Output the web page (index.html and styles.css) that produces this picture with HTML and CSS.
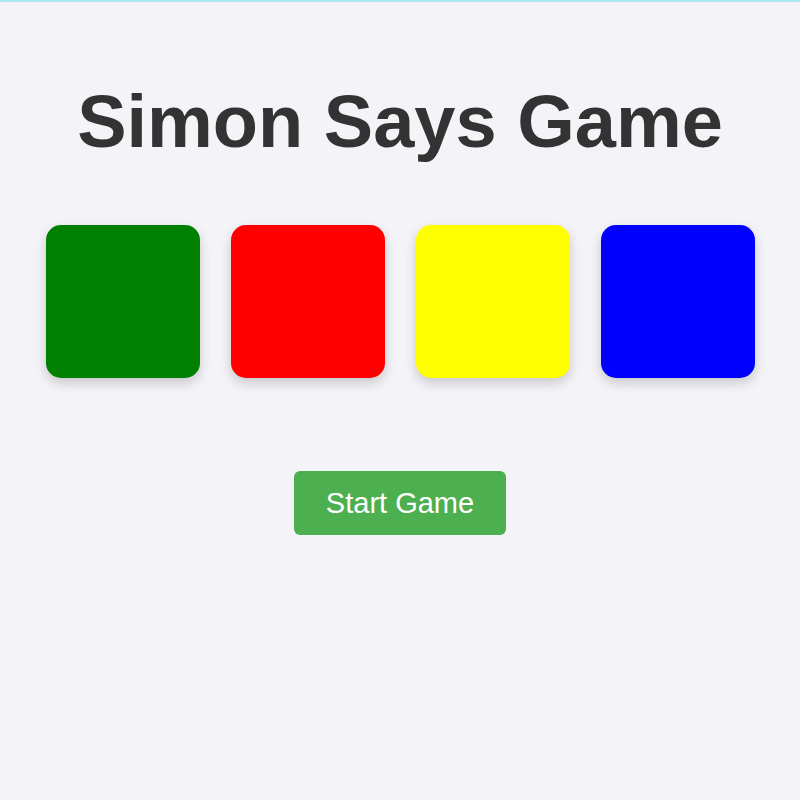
FILE: index.html
```html
<!DOCTYPE html>
<html lang="en">
<head>
    <meta charset="UTF-8">
    <meta name="viewport" content="width=device-width, initial-scale=1.0">
    <title>Simon Says Game</title>
    <link rel="stylesheet" href="styles.css">
</head>
<body>
    <div class="game">
        <h1>Simon Says Game</h1>
        <div class="board">
            <div class="pad green"></div>
            <div class="pad red"></div>
            <div class="pad yellow"></div>
            <div class="pad blue"></div>
        </div>
        <button class="start-btn">Start Game</button>
    </div>
</body>
</html>
```

FILE: styles.css
```css
body {
    font-family: "Liberation Sans", Arial, sans-serif;
    background-color: #f4f4f8;
    border-top: 2px solid #ade9f4;
    margin: 0;
    color: #333;
}
.game {
    display: flex;
    flex-direction: column;
    align-items: center;
    padding-top: 78px;
}
h1 {
    font-size: 74px;
    margin: 0 0 61px;
    line-height: 84px;
}
.board {
    display: flex;
    gap: 31px;
    margin-bottom: 93px;
}
.pad {
    width: 154px;
    height: 153px;
    border-radius: 15px;
    box-shadow: 0 5px 12px rgba(0, 0, 0, 0.18);
}
.green { background-color: #008000; }
.red { background-color: #ff0000; }
.yellow { background-color: #ffff00; }
.blue { background-color: #0000ff; }
.start-btn {
    font-family: "Liberation Sans", Arial, sans-serif;
    font-size: 29px;
    line-height: 34px;
    padding: 15px 30px;
    width: 212px;
    height: 64px;
    background-color: #4caf50;
    color: #fff;
    border: none;
    border-radius: 6px;
    cursor: pointer;
}
```
